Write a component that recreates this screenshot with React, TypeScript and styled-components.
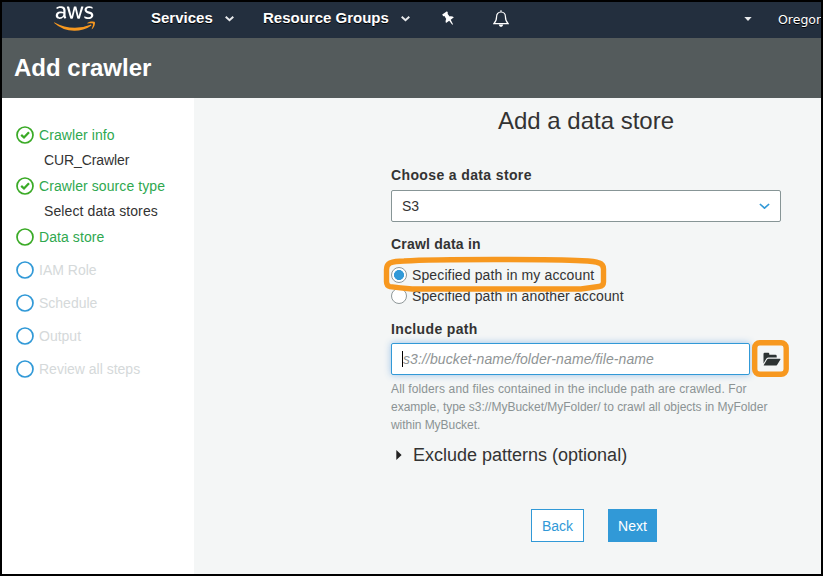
import React from "react";
import styled, { createGlobalStyle } from "styled-components";
import { FaAws } from "react-icons/fa";

const Global = createGlobalStyle`
  * { box-sizing: border-box; }
  html, body { margin: 0; padding: 0; background: #000; }
  body, input, button { font-family: "Liberation Sans", Arial, sans-serif; font-size: 14px; color: #333; }
`;

const Frame = styled.div`
  position: relative;
  width: 823px;
  height: 576px;
  border: 2px solid #000;
  overflow: hidden;
  display: flex;
  flex-direction: column;
  background: #f4f6f6;
`;

const NavBar = styled.nav`
  height: 36px;
  flex: none;
  display: flex;
  background: #232f3e;
  color: #fff;
  padding-left: 52px;
`;

const Logo = styled.div`
  width: 41px;
  height: 33px;
  margin-right: 56px;
  margin-top: -0.5px;
  svg { display: block; width: 41px; height: 33px; }
`;

const GradientDefs = styled.svg`
  position: absolute;
`;

const NavItem = styled.div<{ $width: number }>`
  width: ${(p) => p.$width}px;
  flex: none;
  display: flex;
  align-items: center;
  gap: 12px;
  height: 31px;
  font-weight: bold;
  font-size: 15px;
  text-shadow: 0 1px 0 #000;
  white-space: nowrap;
  svg { margin-top: 3px; }
`;

const NavIcon = styled.div<{ $width: number; $top: number }>`
  width: ${(p) => p.$width}px;
  flex: none;
  padding-top: ${(p) => p.$top}px;
  svg { display: block; }
`;

const Region = styled.div`
  font-family: "DejaVu Sans", Verdana, sans-serif;
  font-size: 12.5px;
  line-height: 35px;
  text-shadow: 0 1px 0 #000;
  white-space: nowrap;
`;

const PageHeader = styled.header`
  height: 60px;
  flex: none;
  background: #545b5c;
  padding: 0 12px;
  h1 { margin: 0; color: #fff; font-size: 24px; line-height: 60px; }
`;

const Body = styled.div`
  flex: 1;
  display: flex;
`;

const Sidebar = styled.aside`
  width: 192px;
  flex: none;
  background: #fff;
  padding: 24px 0 0 14px;
`;

const tones = { done: "#2fa84f", todo: "#d5d9da" };

const Step = styled.div<{ $tone: keyof typeof tones; $gap?: boolean }>`
  height: 26px;
  margin-top: ${(p) => (p.$gap ? 7 : 0)}px;
  display: flex;
  align-items: center;
  gap: 5px;
  color: ${(p) => tones[p.$tone]};
  letter-spacing: ${(p) => (p.$tone === "done" ? 0.08 : 0)}px;
  svg { flex: none; }
`;

const SubStep = styled.div<{ $spacing: number }>`
  height: 25px;
  line-height: 24px;
  padding-left: 28px;
  letter-spacing: ${(p) => p.$spacing}px;
`;

const Main = styled.main`
  flex: 1;
  padding-left: 197px;
`;

const Form = styled.form`
  width: 390px;
  display: flex;
  flex-direction: column;
`;

const Title = styled.h2`
  margin: 8px 0 0;
  font-weight: normal;
  font-size: 24px;
  line-height: 30px;
  text-align: center;
`;

const Label = styled.div<{ $top: number; $spacing: number }>`
  margin-top: ${(p) => p.$top}px;
  font-weight: bold;
  line-height: 18px;
  letter-spacing: ${(p) => p.$spacing}px;
`;

const Select = styled.div`
  margin-top: 6px;
  height: 32px;
  border: 1px solid #879596;
  border-radius: 2px;
  background: #fff;
  display: flex;
  align-items: center;
  justify-content: space-between;
  padding: 0 10px;
`;

const OptionList = styled.div`
  margin-top: 11px;
`;

const Option = styled.label`
  height: 21px;
  display: flex;
  align-items: center;
  gap: 5px;
  letter-spacing: 0.12px;
`;

const Radio = styled.span<{ $on?: boolean }>`
  width: 16px;
  height: 16px;
  border: 1px solid #8f9899;
  border-radius: 50%;
  background: ${(p) => (p.$on ? "radial-gradient(circle, #3199d7 4.7px, #fff 5.3px)" : "#fff")};
`;

const PathRow = styled.div`
  position: relative;
  margin-top: 5px;
  display: flex;
  align-items: center;
  gap: 13px;
  svg { flex: none; }
`;

const PathInput = styled.input`
  width: 359px;
  height: 32px;
  flex: none;
  border: 1px solid #3199d7;
  border-radius: 2px;
  background: #fff;
  box-shadow: 0 0 7px rgba(49, 130, 215, 0.45);
  padding: 0 11px;
  outline: none;
  letter-spacing: 0.1px;
  &::placeholder { color: #8f9495; opacity: 1; font-style: italic; }
`;

const Caret = styled.span`
  position: absolute;
  left: 11px;
  top: 8px;
  width: 1px;
  height: 16px;
  background: #000;
`;

const Help = styled.p`
  margin: 5px 0 0;
  font-size: 12px;
  line-height: 18px;
  color: #8b9394;
  white-space: nowrap;
`;

const HelpLine = styled.span<{ $spacing: number }>`
  display: block;
  letter-spacing: ${(p) => p.$spacing}px;
`;

const Disclosure = styled.div`
  margin-top: 9px;
  height: 24px;
  display: flex;
  align-items: center;
  gap: 11px;
  padding-left: 5px;
  font-size: 18px;
`;

const Actions = styled.div`
  display: flex;
  gap: 24px;
  margin: 42px 0 0 140px;
`;

const Button = styled.button<{ $primary?: boolean }>`
  width: ${(p) => (p.$primary ? 49 : 53)}px;
  height: 33px;
  padding: 0;
  border: 1px solid #3199d7;
  background: ${(p) => (p.$primary ? "#3199d7" : "#fff")};
  color: ${(p) => (p.$primary ? "#fff" : "#3199d7")};
`;

const Highlights = styled.svg`
  position: absolute;
  left: -2px;
  top: -2px;
  pointer-events: none;
`;

const Chevron = ({ color = "#e8eaec", w = 9, sw = 2.2 }) => (
  <svg width={w} height={w * 0.62} viewBox="0 0 10 6.2" fill="none" stroke={color} strokeWidth={sw}>
    <path d="M.8 .9 5 4.700l4.200-3.800" />
  </svg>
);

const StepMark = ({ color, checked }: { color: string; checked?: boolean }) => (
  <svg width="18" height="18" viewBox="0 0 18 18" fill="none" stroke={color}>
    <circle cx="9" cy="9" r="8" strokeWidth="1.7" />
    {checked && <path d="M5.200 8.900 8 11.500l5-5.200" strokeWidth="2.300" />}
  </svg>
);

const finished = [
  { name: "Crawler info", value: "CUR_Crawler", spacing: -0.1 },
  { name: "Crawler source type", value: "Select data stores", spacing: 0.1 },
];
const upcoming = ["IAM Role", "Schedule", "Output", "Review all steps"];

export default function App() {
  return (
    <>
      <Global />
      <Frame>
        <NavBar>
          <GradientDefs width="0" height="0">
            <linearGradient id="brand" gradientUnits="userSpaceOnUse" x1="0" y1="0" x2="0" y2="512">
              <stop offset="0.56" stopColor="#fff" />
              <stop offset="0.56" stopColor="#f7981f" />
            </linearGradient>
          </GradientDefs>
          <Logo><FaAws fill="url(#brand)" /></Logo>
          <NavItem $width={112}>Services <Chevron /></NavItem>
          <NavItem $width={178}>Resource Groups <Chevron /></NavItem>
          <NavIcon $width={52} $top={9}>
            <svg width="14" height="15" viewBox="0 0 14 15" fill="#fff">
              <path d="M1.200 3.500 6 .300l1 1.600-.5.800 2.200 2.800c1.400-.4 2.900-.1 4.200.8L9.700 8.800l2.300 4.500-.7.500-3.100-4-3.200 2.300c-.6-1.500-.5-3 .2-4.200L3.400 5.100l-1.200.1z" />
            </svg>
          </NavIcon>
          <NavIcon $width={251} $top={8}>
            <svg width="16" height="18" viewBox="0 0 16 18" fill="none" stroke="#fff" strokeWidth="1.200">
              <path d="M8 .3v1.700M8 2C5.100 2 3.600 4 3.600 6.500c0 3.800-.9 5.400-2.800 7.200h14.400c-1.900-1.800-2.800-3.400-2.800-7.200C12.400 4 10.900 2 8 2z" />
              <path d="M5.800 14.500h4.400c-.3 1.600-1.200 2.300-2.200 2.300s-1.900-.7-2.200-2.300z" fill="#fff" stroke="none" />
            </svg>
          </NavIcon>
          <NavIcon $width={34} $top={15}>
            <svg width="8" height="4" viewBox="0 0 8 4" fill="#e8eaec"><path d="M.3 0h7.400L4 4z" /></svg>
          </NavIcon>
          <Region>Oregon</Region>
        </NavBar>
        <PageHeader><h1>Add crawler</h1></PageHeader>
        <Body>
          <Sidebar>
            {finished.map((s) => (
              <React.Fragment key={s.name}>
                <Step $tone="done"><StepMark color="#3aaa26" checked />{s.name}</Step>
                <SubStep $spacing={s.spacing}>{s.value}</SubStep>
              </React.Fragment>
            ))}
            <Step $tone="done"><StepMark color="#3aaa26" />Data store</Step>
            {upcoming.map((name) => (
              <Step key={name} $tone="todo" $gap><StepMark color="#3199d7" />{name}</Step>
            ))}
          </Sidebar>
          <Main>
            <Form>
              <Title>Add a data store</Title>
              <Label $top={30} $spacing={0.37}>Choose a data store</Label>
              <Select>S3 <Chevron color="#3199d7" w={11} sw={1.5} /></Select>
              <Label $top={13} $spacing={0.2}>Crawl data in</Label>
              <OptionList>
                <Option><Radio $on />Specified path in my account</Option>
                <Option><Radio />Specified path in another account</Option>
              </OptionList>
              <Label $top={14} $spacing={0.36}>Include path</Label>
              <PathRow>
                <PathInput placeholder="s3://bucket-name/folder-name/file-name" />
                <Caret />
                <svg width="18" height="15" viewBox="0 0 18 15" fill="#2d3333">
                  <path d="M.5 11.500V2Q.5.800 1.700.800h3.600Q6.300.800 6.300 2v.7h6.200q1.200 0 1.200 1.200v1.700H5.600q-1.300 0-2.200 1z" />
                  <path d="M5.500 6.800H17q.8 0 .4.700l-3.200 5.200q-.6.900-1.600.9H1.200q-.8 0-.4-.7l3.100-5.200q.6-.9 1.600-.9z" />
                </svg>
              </PathRow>
              <Help>
                <HelpLine $spacing={0.13}>All folders and files contained in the include path are crawled. For</HelpLine>
                <HelpLine $spacing={-0.015}>example, type s3://MyBucket/MyFolder/ to crawl all objects in MyFolder</HelpLine>
                <HelpLine $spacing={-0.05}>within MyBucket.</HelpLine>
              </Help>
              <Disclosure>
                <svg width="6" height="10" viewBox="0 0 6 10" fill="#222"><path d="M.3 0 5.600 5l-5.300 5z" /></svg>
                Exclude patterns (optional)
              </Disclosure>
              <Actions>
                <Button type="button">Back</Button>
                <Button type="button" $primary>Next</Button>
              </Actions>
            </Form>
          </Main>
        </Body>
        <Highlights width="823" height="576" fill="none" stroke="#f7981f" strokeWidth="5.400">
          <path d="M404 261q25-1.500 90-1.500t88 1.200q13 .5 17 2.200 4.500 1.500 4.500 6v13q0 4-4.500 4.600l-18 2.500H412q-12-1-22-2.400-3.500-.7-3.500-5v-12q0-5 3.500-6.600 5-2 14-2z" />
          <rect x="754.700" y="342.700" width="31.500" height="31.500" rx="5" />
        </Highlights>
      </Frame>
    </>
  );
}
